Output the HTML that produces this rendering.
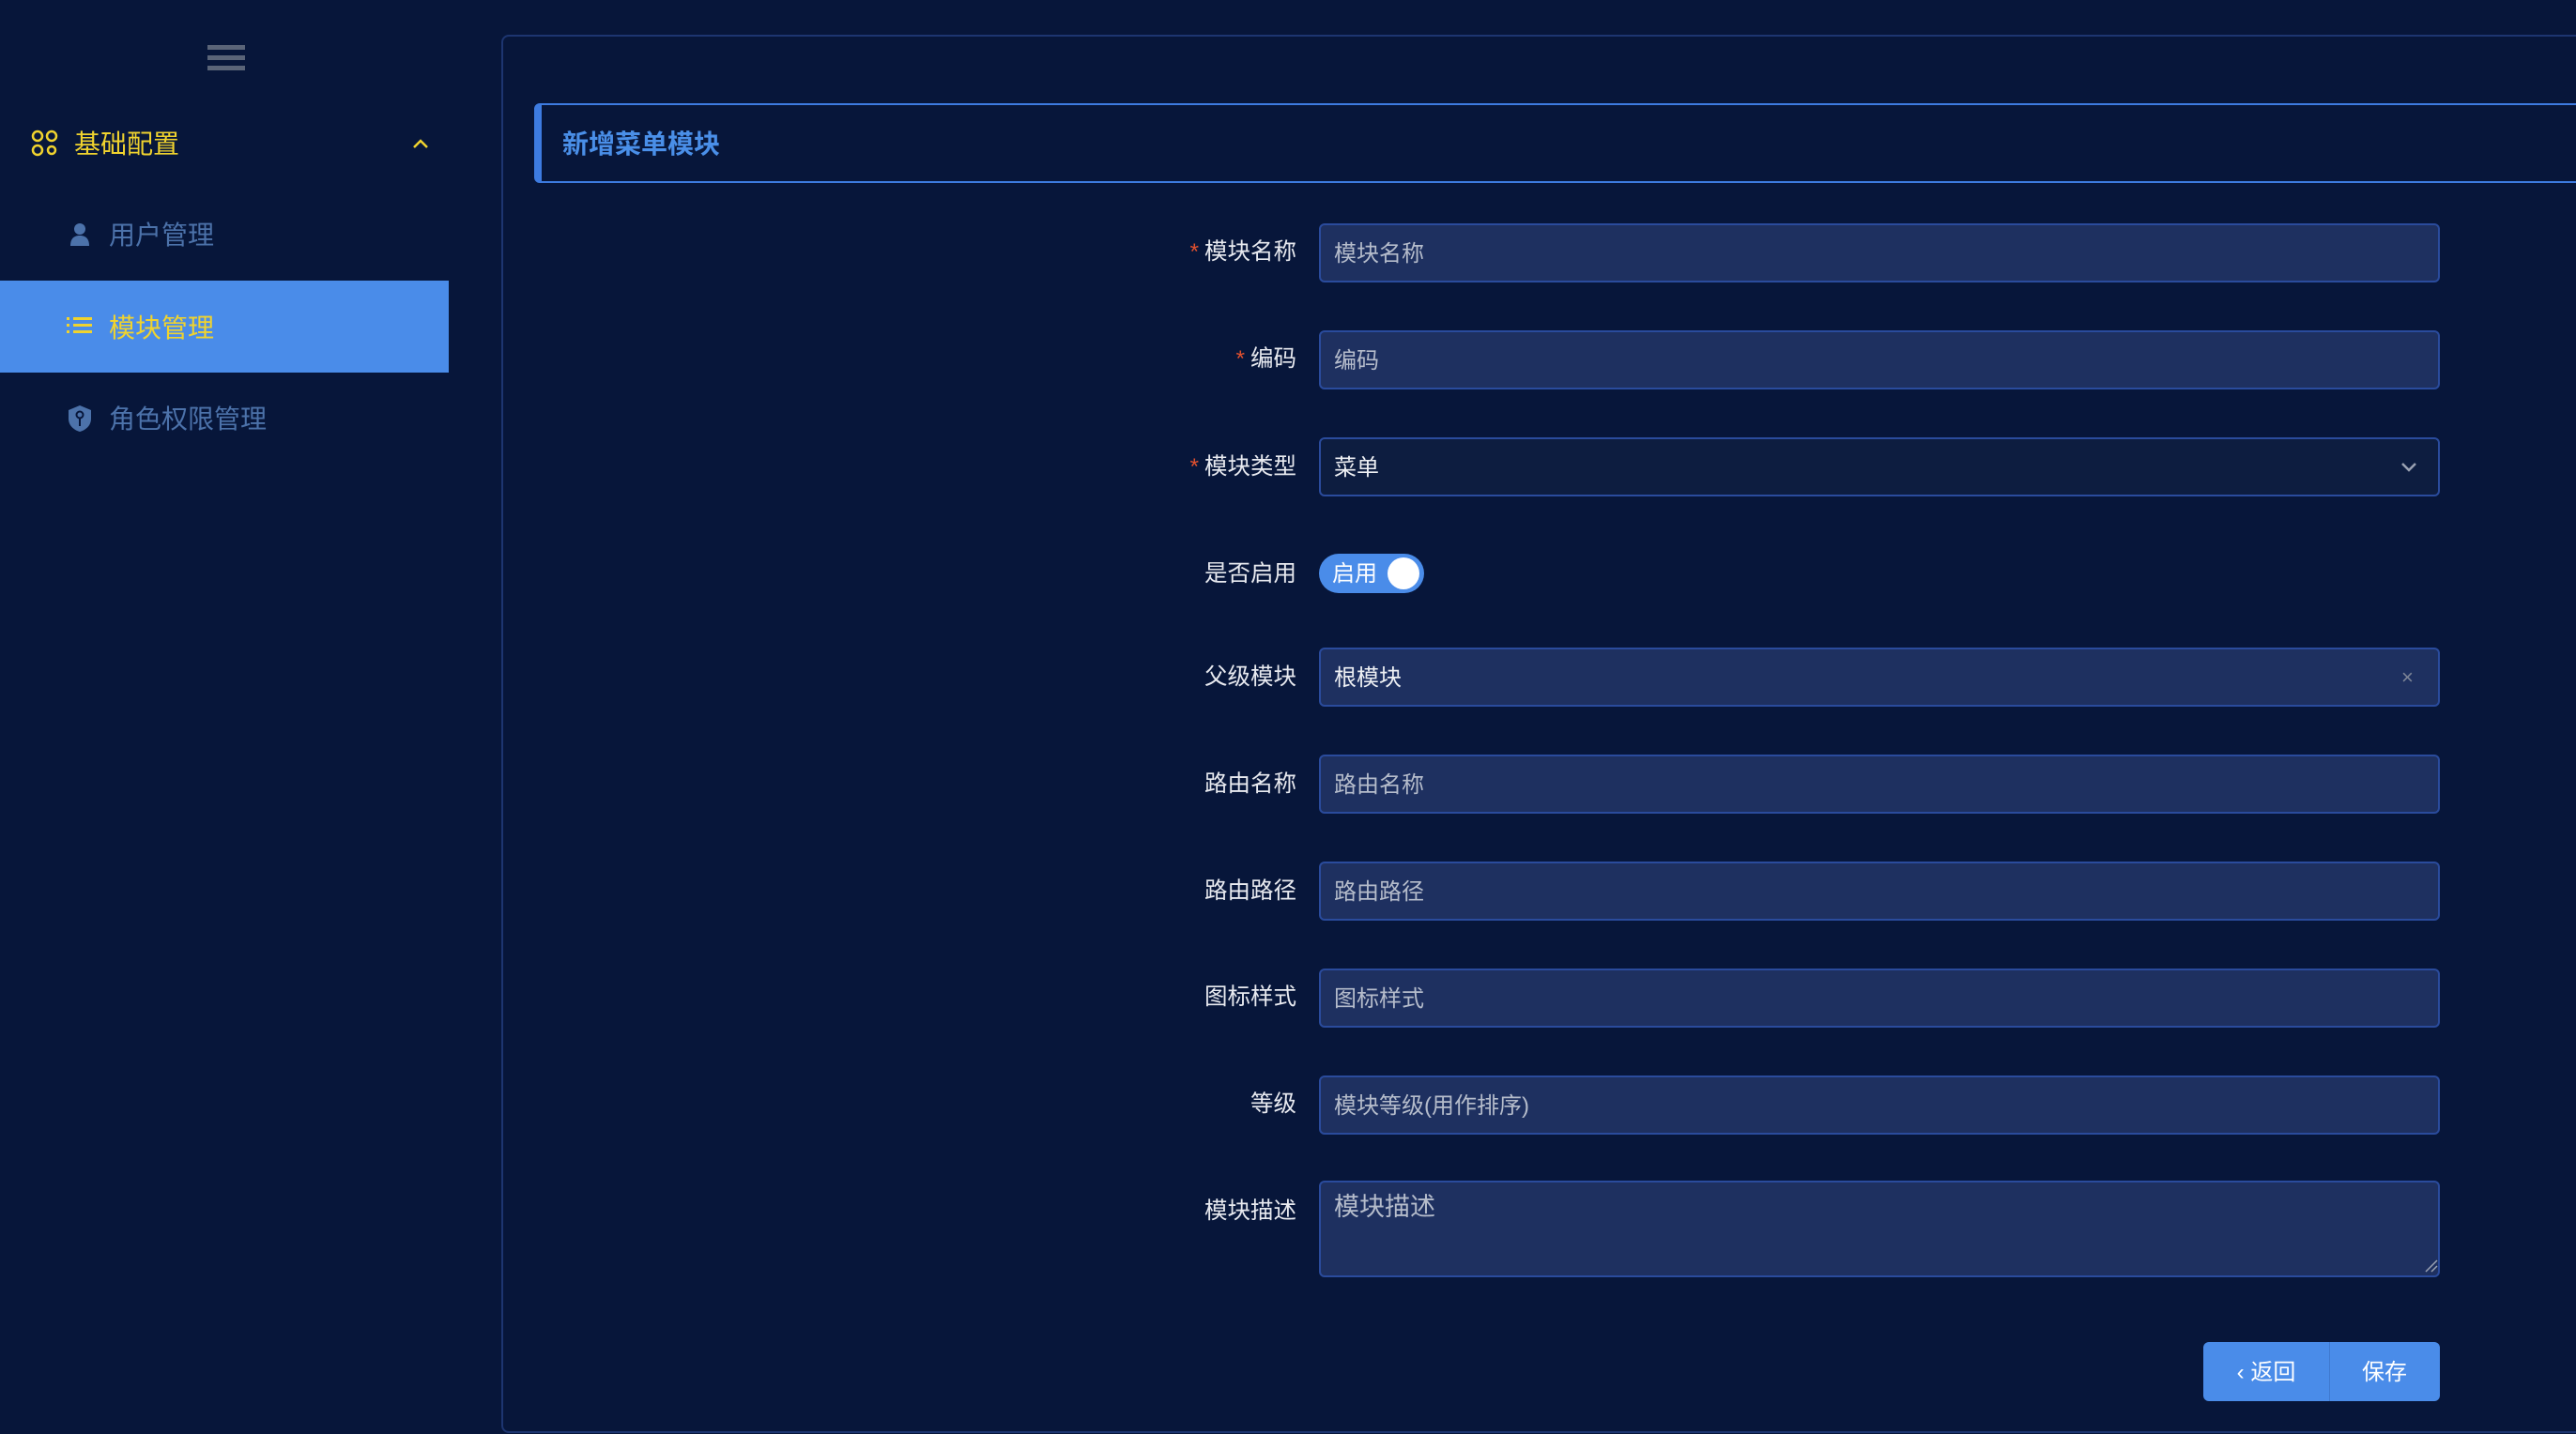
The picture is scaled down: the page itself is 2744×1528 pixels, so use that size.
<!DOCTYPE html>
<html><head><meta charset="utf-8"><style>
*{box-sizing:border-box;margin:0;padding:0}
body{width:2744px;height:1528px;background:#07163a;font-family:"Liberation Sans","Noto Sans CJK SC",sans-serif;position:relative;overflow:hidden}
.a{position:absolute}
.nav{font-size:28px;color:#4c72aa;line-height:40px}
.panel{left:534px;top:37px;width:2230px;height:1490px;border:2px solid #1d3570;border-radius:8px}
.hdr{left:569px;top:110px;width:2200px;height:85px;border:2.5px solid #3d7be0;border-left:8px solid #3d7be0;border-radius:6px 0 0 6px;color:#4a8fe8;font-size:28px;font-weight:bold;line-height:84px;padding-left:22px}
.lbl{width:400px;left:981px;text-align:right;color:#e8eaf0;font-size:24.5px;line-height:42px}
.lbl b{color:#e0502e;font-weight:normal;margin-right:6px}
.inp{left:1405px;width:1194px;height:63px;background:#1e3060;border:2px solid #2a4b9c;border-radius:6px;color:#b5bccb;font-size:24px;line-height:62px;padding-left:14px}
</style></head><body>
<div class="a" style="left:221px;top:48px;width:40px;height:5px;background:#5a6478"></div>
<div class="a" style="left:221px;top:59px;width:40px;height:5px;background:#5a6478"></div>
<div class="a" style="left:221px;top:70px;width:40px;height:5px;background:#5a6478"></div>

<svg class="a" style="left:33px;top:138px" width="30" height="30" viewBox="0 0 30 30" fill="none" stroke="#f0d32e" stroke-width="2.5"><circle cx="7" cy="7" r="5"/><circle cx="22" cy="7" r="5"/><circle cx="7" cy="22" r="5"/><circle cx="22" cy="22" r="4"/></svg>
<div class="a nav" style="left:79px;top:134px;color:#f0d32e">基础配置</div>
<svg class="a" style="left:438px;top:146px" width="20" height="14" viewBox="0 0 20 14"><path d="M3 11L10 4L17 11" stroke="#f0d32e" stroke-width="2.5" fill="none"/></svg>

<svg class="a" style="left:74px;top:237px" width="22" height="26" viewBox="0 0 22 26" fill="#4c72aa"><circle cx="11" cy="7" r="6"/><path d="M1 25c0-8 4-11 10-11s10 3 10 11z"/></svg>
<div class="a nav" style="left:116px;top:231px">用户管理</div>

<div class="a" style="left:0;top:299px;width:478px;height:98px;background:#4a8ce9"></div>
<svg class="a" style="left:71px;top:336px" width="28" height="24" viewBox="0 0 28 24" fill="#f0d32e"><rect x="0" y="2" width="3" height="3"/><rect x="0" y="9" width="3" height="3"/><rect x="0" y="16" width="3" height="3"/><rect x="7" y="2" width="20" height="3"/><rect x="7" y="9" width="20" height="3"/><rect x="7" y="16" width="20" height="3"/></svg>
<div class="a nav" style="left:116px;top:330px;color:#f0d32e">模块管理</div>

<svg class="a" style="left:72px;top:431px" width="26" height="30" viewBox="0 0 26 30"><path d="M13 1L25 6v9c0 7-5 12-12 14C6 27 1 22 1 15V6z" fill="#4c72aa"/><circle cx="13" cy="11" r="3.5" fill="none" stroke="#07163a" stroke-width="2"/><path d="M13 14v9" stroke="#07163a" stroke-width="2"/></svg>
<div class="a nav" style="left:116px;top:427px">角色权限管理</div>

<div class="a panel"></div>
<div class="a hdr">新增菜单模块</div>

<div class="a lbl" style="top:248px"><b>*</b>模块名称</div>
<div class="a inp" style="top:238px">模块名称</div>
<div class="a lbl" style="top:362px"><b>*</b>编码</div>
<div class="a inp" style="top:352px">编码</div>
<div class="a lbl" style="top:477px"><b>*</b>模块类型</div>
<div class="a inp" style="top:466px;background:#0d1d40;color:#eef0f4">菜单</div>
<svg class="a" style="left:2556px;top:490px" width="20" height="14" viewBox="0 0 20 14"><path d="M3 4L10 11L17 4" stroke="#9aa2b2" stroke-width="2.5" fill="none"/></svg>
<div class="a lbl" style="top:591px">是否启用</div>
<div class="a" style="left:1405px;top:590px;width:112px;height:42px;border-radius:21px;background:#4a8ce9;color:#fff;font-size:24px;line-height:44px;padding-left:14px">启用</div>
<div class="a" style="left:1478px;top:594px;width:34px;height:34px;border-radius:50%;background:#fff"></div>
<div class="a lbl" style="top:701px">父级模块</div>
<div class="a inp" style="top:690px;color:#eef0f4">根模块</div>
<div class="a" style="left:2558px;top:702px;color:#7d8597;font-size:22px;line-height:40px">×</div>
<div class="a lbl" style="top:815px">路由名称</div>
<div class="a inp" style="top:804px">路由名称</div>
<div class="a lbl" style="top:929px">路由路径</div>
<div class="a inp" style="top:918px">路由路径</div>
<div class="a lbl" style="top:1042px">图标样式</div>
<div class="a inp" style="top:1032px">图标样式</div>
<div class="a lbl" style="top:1156px">等级</div>
<div class="a inp" style="top:1146px">模块等级(用作排序)</div>
<div class="a lbl" style="top:1270px">模块描述</div>
<div class="a inp" style="top:1258px;height:103px;font-size:27px;line-height:52px">模块描述</div>
<svg class="a" style="left:2583px;top:1342px" width="14" height="14" viewBox="0 0 14 14"><path d="M1 13L13 1M7 13L13 7" stroke="#9aa2b2" stroke-width="1.5"/></svg>

<div class="a" style="left:2347px;top:1430px;width:252px;height:63px;background:#4a8ce9;border-radius:6px"></div>
<div class="a" style="left:2481px;top:1430px;width:1px;height:63px;background:#3f7ad0"></div>
<div class="a" style="left:2347px;top:1431px;width:134px;line-height:63px;text-align:center;color:#fff;font-size:24px">‹ 返回</div>
<div class="a" style="left:2481px;top:1431px;width:118px;line-height:63px;text-align:center;color:#fff;font-size:24px">保存</div>
</body></html>
